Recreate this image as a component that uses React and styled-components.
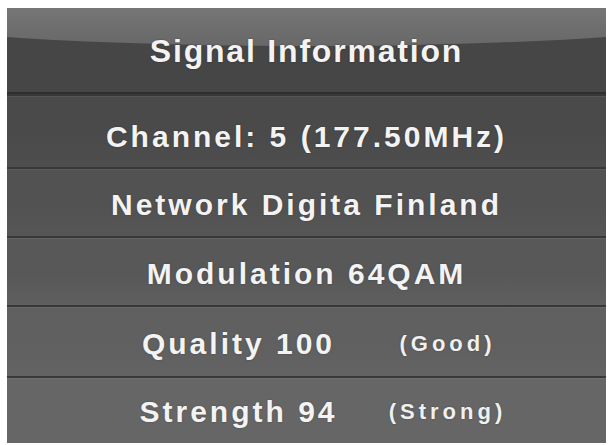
import React from "react";
import styled, { createGlobalStyle } from "styled-components";

const Global = createGlobalStyle`
  html, body { margin: 0; padding: 0; background: #ffffff; }
  body { padding: 8px 3px 2px 7px; font-family: "Liberation Sans", Arial, sans-serif; }
`;

const Panel = styled.div`
  width: 599px;
  height: 435px;
  display: flex;
  flex-direction: column;
  background: #4c4c4c;
  box-shadow: inset 2px 0 0 #777, inset -2px 0 0 #777, inset 0 1px 0 #8a8a8a;
  overflow: hidden;
`;

const Header = styled.div`
  position: relative;
  height: 84px;
  flex: none;
  display: flex;
  align-items: center;
  justify-content: center;
  background: #464646;
  border-bottom: 2px solid #2f2f2f;
  overflow: hidden;

  &::before {
    content: "";
    position: absolute;
    left: -200px;
    right: -200px;
    top: -52px;
    height: 90px;
    border-radius: 50%;
    background: linear-gradient(to bottom, #777 55%, #6e6e6e 80%, #686868 100%);
  }
`;

const Title = styled.h1`
  position: relative;
  margin: 2px 0 0 0;
  font-size: 32px;
  font-weight: 700;
  letter-spacing: 1.8px;
  color: #f3f3f3;
  text-shadow: 0 0 2px rgba(0, 0, 0, 0.35);
`;

const Row = styled.div`
  height: ${(p) => p.$h}px;
  flex: none;
  box-sizing: border-box;
  display: flex;
  align-items: center;
  justify-content: center;
  padding-top: ${(p) => p.$shift}px;
  background: linear-gradient(to bottom, ${(p) => p.$bg} 0%, ${(p) => p.$bg} 55%, ${(p) => p.$bg2} 100%);
  border-top: 2px solid #383838;
  box-shadow: inset 0 1px 0 ${(p) => p.$hl};
`;

const StatRow = styled(Row)`
  display: grid;
  grid-template-columns: 282px 136px;
  justify-content: center;
  align-items: center;
`;

const Value = styled.span`
  font-size: 30px;
  font-weight: 700;
  letter-spacing: 3px;
  color: #f3f3f3;
  text-align: center;
  white-space: nowrap;
  text-shadow: 0 0 2px rgba(0, 0, 0, 0.3);
`;

const Status = styled.span`
  font-size: 22px;
  font-weight: 700;
  letter-spacing: 4px;
  color: #f0f0f0;
  text-align: center;
  white-space: nowrap;
  text-shadow: 0 0 2px rgba(0, 0, 0, 0.3);
`;

export default function App() {
  return (
    <>
      <Global />
      <Panel>
        <Header>
          <Title>Signal Information</Title>
        </Header>
        <Row $h={73} $shift={10} $bg="#4a4a4a" $bg2="#4e4e4e" $hl="#555">
          <Value>Channel: 5 (177.50MHz)</Value>
        </Row>
        <Row $h={69} $shift={4} $bg="#525252" $bg2="#565656" $hl="#5c5c5c">
          <Value>Network Digita Finland</Value>
        </Row>
        <Row $h={69} $shift={4} $bg="#585858" $bg2="#5f5f5f" $hl="#636363">
          <Value>Modulation 64QAM</Value>
        </Row>
        <StatRow $h={71} $shift={4} $bg="#606060" $bg2="#636363" $hl="#6a6a6a">
          <Value>Quality 100</Value>
          <Status>(Good)</Status>
        </StatRow>
        <StatRow $h={67} $shift={2} $bg="#666666" $bg2="#666666" $hl="#707070">
          <Value>Strength 94</Value>
          <Status>(Strong)</Status>
        </StatRow>
      </Panel>
    </>
  );
}
